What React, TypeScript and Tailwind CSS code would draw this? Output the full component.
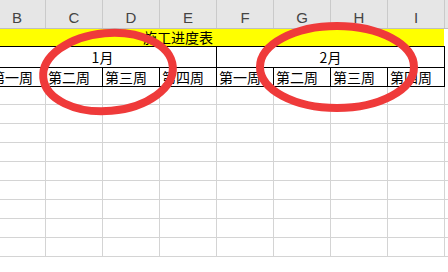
const cols = ['B', 'C', 'D', 'E', 'F', 'G', 'H', 'I', ''];
const weeks = ['第一周', '第二周', '第三周', '第四周', '第一周', '第二周', '第三周', '第四周'];
const bodyRows = [17, 18, 18, 18, 18, 18, 18, 18, 18];

const cjk = "font-['Noto_Sans_CJK_SC','Noto_Sans',sans-serif]";

export default function App() {
  return (
    <div className={`relative w-[448px] h-[272px] overflow-hidden bg-white ${cjk}`}>
      <div className="-ml-[11px] w-[520px]">
        {/* column letters */}
        <div className="flex h-[29px] bg-[#e6e6e6] border-b border-[#bfbfbf]">
          {cols.map((c, i) => (
            <div
              key={i}
              className="w-[57px] shrink-0 border-r border-[#cacaca] flex items-end justify-center pb-[1px] text-[15px] leading-[18px] text-[#444] font-['Liberation_Sans',sans-serif]"
            >
              {c}
            </div>
          ))}
        </div>

        {/* title row */}
        <div className="flex h-[17px]">
          <div className="w-[455px] shrink-0 bg-[#ffff00] pl-[154px] text-[14px] leading-[17px] text-black">
            施工进度表
          </div>
        </div>

        {/* months */}
        <div className="flex border-t border-black w-[456px]">
          <div className="w-[228px] h-[20px] shrink-0 border-r border-black text-center text-[14px] leading-[20px] text-black">
            1月
          </div>
          <div className="w-[228px] h-[20px] shrink-0 border-r border-black text-center text-[14px] leading-[20px] text-black">
            2月
          </div>
        </div>

        {/* weeks */}
        <div className="flex border-y border-black w-[456px]">
          {weeks.map((w, i) => (
            <div
              key={i}
              className="w-[57px] h-[18px] shrink-0 border-r border-black pl-[2px] text-[14px] leading-[18px] text-black whitespace-nowrap overflow-hidden"
            >
              {w}
            </div>
          ))}
        </div>

        {/* empty cells */}
        {bodyRows.map((h, r) => (
          <div key={r} className="flex border-b border-[#d4d4d4]">
            {cols.map((_, i) => (
              <div
                key={i}
                style={{ height: h }}
                className="w-[57px] shrink-0 border-r border-[#d4d4d4]"
              />
            ))}
          </div>
        ))}
      </div>

      {/* hand-drawn marks */}
      <svg className="absolute inset-0 pointer-events-none" width="448" height="272">
        <ellipse cx="108" cy="72" rx="65" ry="39" fill="none" stroke="#ef3a3a" strokeWidth="8" transform="rotate(-5 108 72)" />
        <ellipse cx="337" cy="67" rx="77" ry="41" fill="none" stroke="#ef3a3a" strokeWidth="8" />
      </svg>
    </div>
  );
}
